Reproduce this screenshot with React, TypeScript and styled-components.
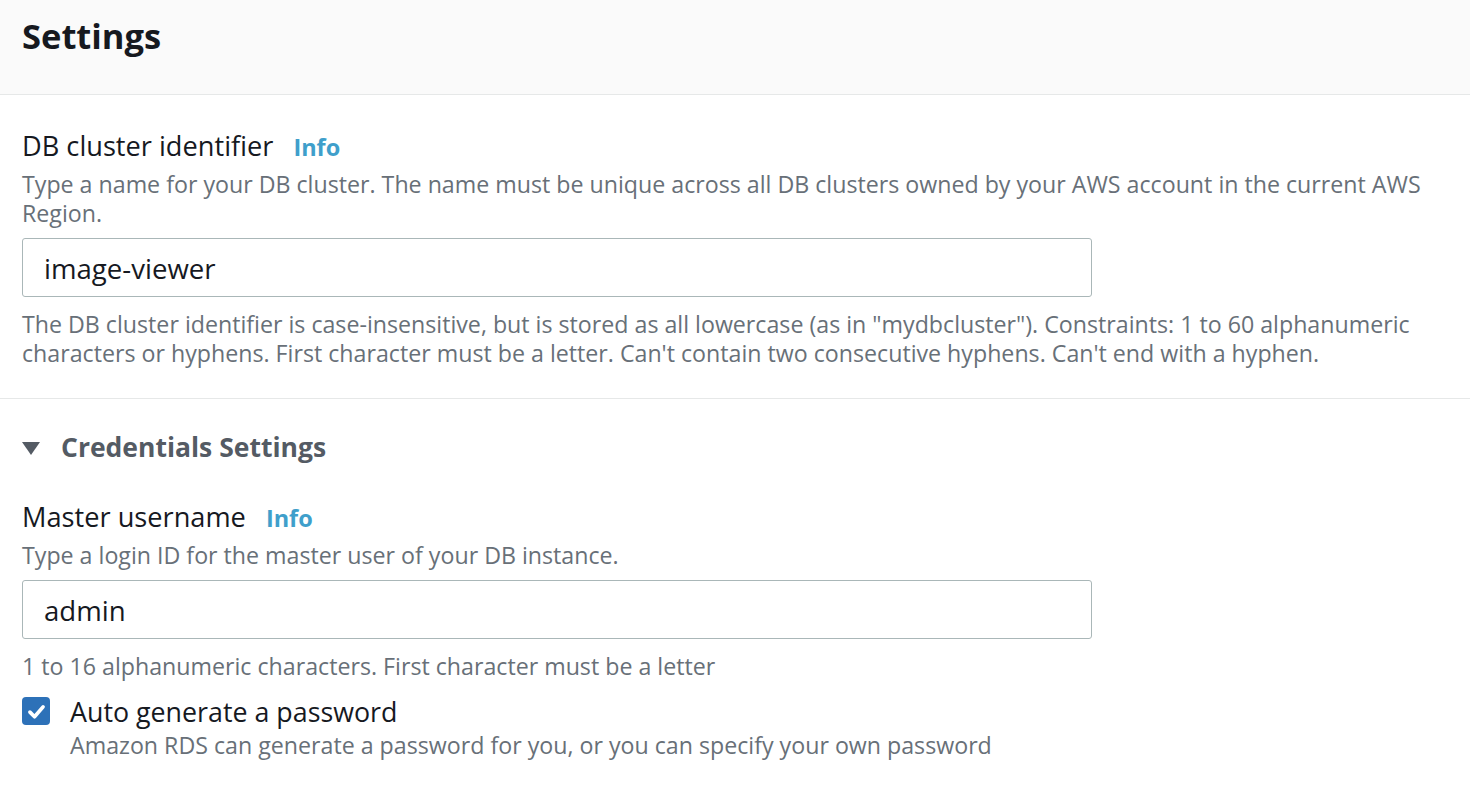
import React from "react";
import styled, { createGlobalStyle } from "styled-components";

const Global = createGlobalStyle`
  html, body { margin: 0; padding: 0; background: #ffffff; }
  body { font-family: "Open Sans", "Noto Sans", Arial, sans-serif; color: #16191f; }
  * { box-sizing: border-box; }
`;

const Page = styled.div`
  width: 1470px;
  min-height: 788px;
  background: #ffffff;
`;

const Header = styled.header`
  height: 95px;
  background: #fafafa;
  border-bottom: 1.5px solid #e6e8e8;
  padding: 16px 22px 0;
`;

const Title = styled.h2`
  margin: 0;
  font-size: 34.5px;
  line-height: 40px;
  font-weight: 700;
  color: #16191f;
`;

const Section = styled.section<{ $divider?: boolean }>`
  padding: 0 22px 0;
  border-bottom: ${(p) => (p.$divider ? "1.5px solid #e6e8e8" : "none")};
`;

const Field = styled.div<{ $top: number; $bottom: number }>`
  display: flex;
  flex-direction: column;
  padding-top: ${(p) => p.$top}px;
  padding-bottom: ${(p) => p.$bottom}px;
`;

const LabelRow = styled.div`
  display: flex;
  align-items: baseline;
  gap: 20px;
  font-size: 27.2px;
  line-height: 36px;
  color: #16191f;
`;

const InfoLink = styled.a`
  font-size: 23.5px;
  font-weight: 700;
  color: #3f9fcb;
  text-decoration: none;
`;

const Description = styled.div`
  margin-top: 5px;
  font-size: 23.2px;
  line-height: 29px;
  color: #687078;
`;

const Input = styled.input`
  margin-top: 10px;
  width: 1070px;
  height: 59px;
  border: 1.5px solid #aab7b8;
  border-radius: 3px;
  padding: 0 21px;
  font-family: inherit;
  font-size: 27.6px;
  color: #16191f;
  background: #fff;
  outline: none;
`;

const Hint = styled.div`
  margin-top: 13px;
  font-size: 23.2px;
  line-height: 29px;
  color: #687078;
`;

const ExpandHeader = styled.div`
  display: flex;
  align-items: center;
  gap: 21px;
  padding-top: 30px;
  font-size: 26.5px;
  line-height: 36px;
  font-weight: 700;
  color: #545b64;
`;

const Caret = styled.span`
  width: 0;
  height: 0;
  border-left: 9px solid transparent;
  border-right: 9px solid transparent;
  border-top: 13px solid #545b64;
  margin-top: 2px;
`;

const CheckRow = styled.label`
  display: grid;
  grid-template-columns: 28px 1fr;
  column-gap: 20px;
  margin-top: 13px;
  padding-bottom: 30px;
`;

const Box = styled.span`
  width: 28px;
  height: 28px;
  margin-top: 3px;
  border-radius: 4px;
  background: #2d71b8;
  display: flex;
  align-items: center;
  justify-content: center;
`;

const CheckLabel = styled.div`
  font-size: 26.8px;
  line-height: 36px;
  color: #16191f;
`;

const CheckDesc = styled.div`
  font-size: 23.2px;
  line-height: 29px;
  color: #687078;
  margin-top: 1px;
`;

export default function App() {
  return (
    <Page>
      <Global />
      <Header>
        <Title>Settings</Title>
      </Header>
      <Section $divider>
        <Field $top={33} $bottom={30}>
          <LabelRow>
            DB cluster identifier <InfoLink href="#">Info</InfoLink>
          </LabelRow>
          <Description>
            Type a name for your DB cluster. The name must be unique across all DB clusters owned by your AWS account in the current AWS Region.
          </Description>
          <Input defaultValue="image-viewer" />
          <Hint>
            The DB cluster identifier is case-insensitive, but is stored as all lowercase (as in "mydbcluster"). Constraints: 1 to 60 alphanumeric characters or hyphens. First character must be a letter. Can't contain two consecutive hyphens. Can't end with a hyphen.
          </Hint>
        </Field>
      </Section>
      <Section>
        <ExpandHeader>
          <Caret />
          Credentials Settings
        </ExpandHeader>
        <Field $top={34} $bottom={0}>
          <LabelRow>
            Master username <InfoLink href="#">Info</InfoLink>
          </LabelRow>
          <Description>Type a login ID for the master user of your DB instance.</Description>
          <Input defaultValue="admin" />
          <Hint>1 to 16 alphanumeric characters. First character must be a letter</Hint>
        </Field>
        <CheckRow>
          <Box>
            <svg width="21" height="21" viewBox="0 0 16 16" fill="none">
              <path d="M3 8.5 L6.5 12 L13 4.5" stroke="#fff" strokeWidth="2.8" strokeLinecap="round" strokeLinejoin="round" />
            </svg>
          </Box>
          <div>
            <CheckLabel>Auto generate a password</CheckLabel>
            <CheckDesc>Amazon RDS can generate a password for you, or you can specify your own password</CheckDesc>
          </div>
        </CheckRow>
      </Section>
    </Page>
  );
}
